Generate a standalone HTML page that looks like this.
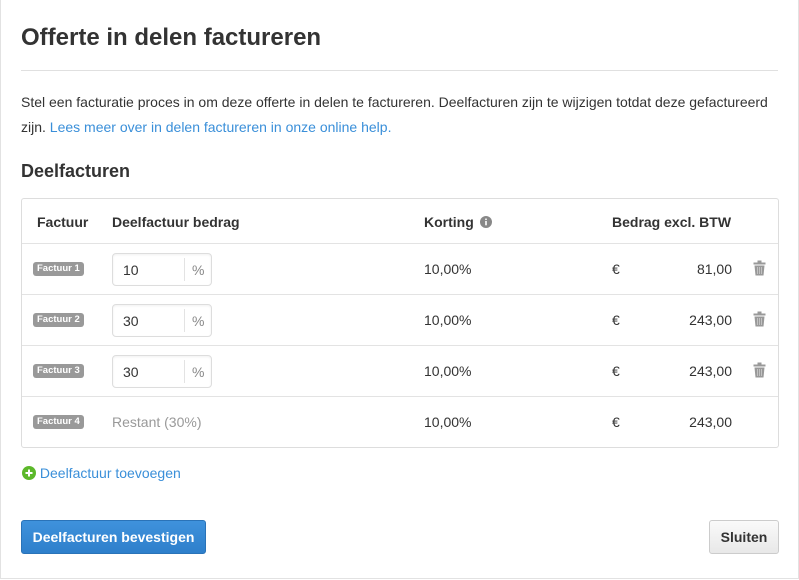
<!DOCTYPE html>
<html><head><style>
*{box-sizing:border-box;margin:0;padding:0}
body{width:799px;height:580px;background:#fff;font-family:"Liberation Sans",Arial,sans-serif;color:#333;position:relative;overflow:hidden}
.frame{position:absolute;left:0;top:0;width:799px;height:579px;border:1px solid #e2e2e2;border-top:none}
.abs{position:absolute}
h1{position:absolute;left:21px;top:24px;font-size:24px;font-weight:bold;color:#333}
.hr{position:absolute;left:21px;top:70px;width:757px;height:1px;background:#e0e0e0}
p{position:absolute;left:21px;top:90px;width:770px;font-size:14px;line-height:25px;color:#333}
a{color:#3a8fd9;text-decoration:none}
h2{position:absolute;left:21px;top:161px;font-size:18px;font-weight:bold}
.tbl{position:absolute;left:21px;top:198px;width:758px;height:250px;border:1px solid #ddd;border-radius:3px}
.row{position:absolute;left:0;width:756px;height:51px;border-top:1px solid #e3e3e3;font-size:14px}
.th{font-size:14px;font-weight:bold;position:absolute;top:15px}
.badge{position:absolute;left:11px;top:18px;background:#999;color:#fff;font-size:9.5px;font-weight:bold;padding:2px 4px;border-radius:3px;line-height:10px}
.inp{position:absolute;left:90px;top:9px;width:100px;height:33px;border:1px solid #ddd;border-radius:4px;background:#fff;box-shadow:inset 0 1px 2px rgba(0,0,0,.06)}
.inp .v{position:absolute;left:10px;top:8px}
.inp .d{position:absolute;left:71px;top:4px;width:1px;height:23px;background:#e3e3e3}
.inp .pc{position:absolute;left:79px;top:8px;color:#888}
.c{position:absolute;top:17px}
.amt{position:absolute;right:46px;top:17px}
.tr{position:absolute;left:731px;top:16px}
</style></head><body>
<div class="frame"></div>
<h1>Offerte in delen factureren</h1>
<div class="hr"></div>
<p>Stel een facturatie proces in om deze offerte in delen te factureren. Deelfacturen zijn te wijzigen totdat deze gefactureerd zijn. <a>Lees meer over in delen factureren in onze online help.</a></p>
<h2>Deelfacturen</h2>
<div class="tbl">
 <span class="th" style="left:15px">Factuur</span>
 <span class="th" style="left:90px">Deelfactuur bedrag</span>
 <span class="th" style="left:402px">Korting <svg width="12" height="12" viewBox="0 0 12 12" style="vertical-align:-1px;margin-left:2px"><circle cx="6" cy="6" r="6" fill="#888"/><rect x="5.2" y="5" width="1.6" height="4.3" fill="#fff"/><circle cx="6" cy="3.3" r="0.9" fill="#fff"/></svg></span>
 <span class="th" style="left:590px">Bedrag excl. BTW</span>

 <div class="row" style="top:44px"><span class="badge">Factuur 1</span><div class="inp"><span class="v">10</span><span class="d"></span><span class="pc">%</span></div><span class="c" style="left:402px">10,00%</span><span class="c" style="left:590px">€</span><span class="amt">81,00</span><svg class="tr" width="13" height="16" viewBox="0 0 13 16"><rect x="4.5" y="0.5" width="4" height="2" fill="#999"/><rect x="0.5" y="2.5" width="12" height="2" fill="#999"/><path d="M1.5 5.5h10l-1 10h-8z" fill="#999"/><path d="M4.5 7v7M6.5 7v7M8.5 7v7" stroke="#ccc" stroke-width="0.8"/></svg></div>
 <div class="row" style="top:95px"><span class="badge">Factuur 2</span><div class="inp"><span class="v">30</span><span class="d"></span><span class="pc">%</span></div><span class="c" style="left:402px">10,00%</span><span class="c" style="left:590px">€</span><span class="amt">243,00</span><svg class="tr" width="13" height="16" viewBox="0 0 13 16"><rect x="4.5" y="0.5" width="4" height="2" fill="#999"/><rect x="0.5" y="2.5" width="12" height="2" fill="#999"/><path d="M1.5 5.5h10l-1 10h-8z" fill="#999"/><path d="M4.5 7v7M6.5 7v7M8.5 7v7" stroke="#ccc" stroke-width="0.8"/></svg></div>
 <div class="row" style="top:146px"><span class="badge">Factuur 3</span><div class="inp"><span class="v">30</span><span class="d"></span><span class="pc">%</span></div><span class="c" style="left:402px">10,00%</span><span class="c" style="left:590px">€</span><span class="amt">243,00</span><svg class="tr" width="13" height="16" viewBox="0 0 13 16"><rect x="4.5" y="0.5" width="4" height="2" fill="#999"/><rect x="0.5" y="2.5" width="12" height="2" fill="#999"/><path d="M1.5 5.5h10l-1 10h-8z" fill="#999"/><path d="M4.5 7v7M6.5 7v7M8.5 7v7" stroke="#ccc" stroke-width="0.8"/></svg></div>
 <div class="row" style="top:197px"><span class="badge">Factuur 4</span><span class="c" style="left:90px;color:#999">Restant (30%)</span><span class="c" style="left:402px">10,00%</span><span class="c" style="left:590px">€</span><span class="amt">243,00</span></div>
</div>
<div class="abs" style="left:22px;top:465px;font-size:14px"><svg width="14" height="14" viewBox="0 0 14 14" style="vertical-align:-2px"><circle cx="7" cy="7" r="7" fill="#5cb82a"/><path d="M7 3.5v7M3.5 7h7" stroke="#fff" stroke-width="2"/></svg> <a>Deelfactuur toevoegen</a></div>
<div class="abs" style="left:21px;top:520px;width:185px;height:34px;background:linear-gradient(#3f92dc,#2e7fcb);border:1px solid #2a73b8;border-radius:3px;color:#fff;font-weight:bold;font-size:14px;text-align:center;line-height:32px">Deelfacturen bevestigen</div>
<div class="abs" style="left:709px;top:520px;width:70px;height:34px;background:linear-gradient(#fafafa,#e8e8e8);border:1px solid #ccc;border-radius:3px;color:#333;font-weight:bold;font-size:14px;text-align:center;line-height:32px">Sluiten</div>
</body></html>
